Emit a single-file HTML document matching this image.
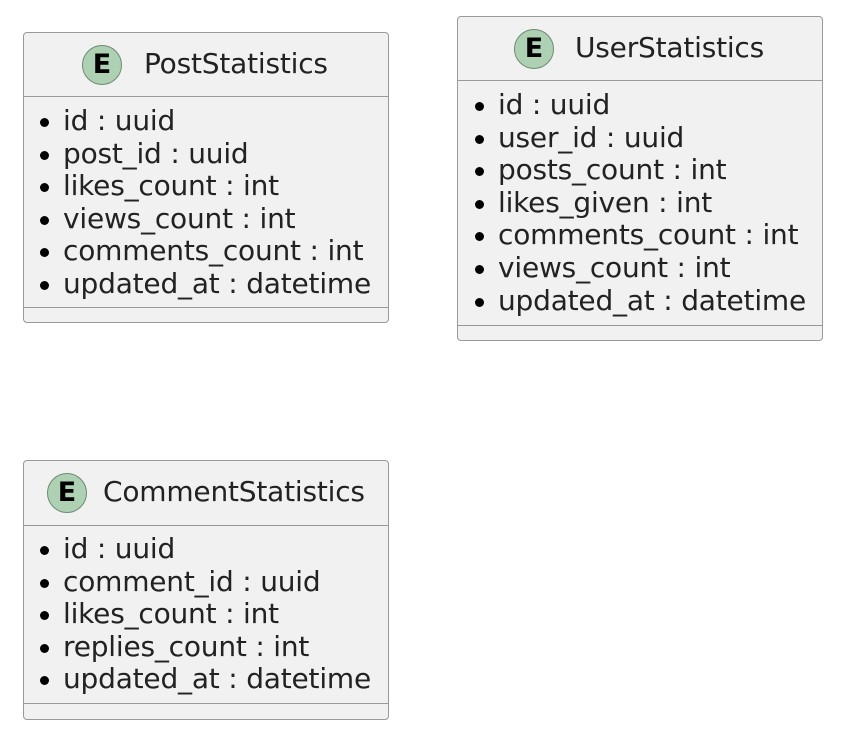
<!DOCTYPE html>
<html><head><meta charset="utf-8"><style>
body{margin:0;width:846px;height:740px;background:#fff;position:relative;overflow:hidden;font-family:"DejaVu Sans","Liberation Sans",sans-serif;color:#222}
.box{position:absolute;background:#f1f1f1;border:1.5px solid #999;border-radius:4px;box-sizing:border-box}
.hl{position:absolute;left:0;right:0;height:0;border-top:1.5px solid #999}
.t{position:absolute;font-size:28px;line-height:32px;white-space:nowrap;color:#222;letter-spacing:-0.2px}
.c{position:absolute;width:40px;height:40px;border-radius:50%;background:#add1b2;border:1.5px solid #6e8a72;box-sizing:border-box;text-align:center;font:bold 27px/37px "DejaVu Sans",sans-serif;color:#000}
.rows{position:absolute;font-size:28px;line-height:32.6px;white-space:nowrap;letter-spacing:-0.2px}
.rows div{position:relative;padding-left:24px}
.rows div:before{content:"";position:absolute;left:1px;top:13px;width:9px;height:9px;border-radius:50%;background:#000}
</style></head><body>

<div class="box" style="left:23px;top:32px;width:366px;height:291px">
  <div class="hl" style="top:63px"></div>
  <div class="hl" style="top:274px"></div>
  <div class="c" style="left:58px;top:12px">E</div>
  <div class="t" style="left:120px;top:15px">PostStatistics</div>
  <div class="rows" style="left:15px;top:72px">
    <div>id : uuid</div><div>post_id : uuid</div><div>likes_count : int</div><div>views_count : int</div><div>comments_count : int</div><div>updated_at : datetime</div>
  </div>
</div>

<div class="box" style="left:457px;top:16px;width:366px;height:325px">
  <div class="hl" style="top:63px"></div>
  <div class="hl" style="top:308px"></div>
  <div class="c" style="left:56px;top:12px">E</div>
  <div class="t" style="left:117px;top:15px">UserStatistics</div>
  <div class="rows" style="left:16px;top:72px">
    <div>id : uuid</div><div>user_id : uuid</div><div>posts_count : int</div><div>likes_given : int</div><div>comments_count : int</div><div>views_count : int</div><div>updated_at : datetime</div>
  </div>
</div>

<div class="box" style="left:23px;top:460px;width:366px;height:260px">
  <div class="hl" style="top:64px"></div>
  <div class="hl" style="top:242px"></div>
  <div class="c" style="left:23px;top:12px">E</div>
  <div class="t" style="left:79px;top:15px">CommentStatistics</div>
  <div class="rows" style="left:15px;top:72px">
    <div>id : uuid</div><div>comment_id : uuid</div><div>likes_count : int</div><div>replies_count : int</div><div>updated_at : datetime</div>
  </div>
</div>

</body></html>
